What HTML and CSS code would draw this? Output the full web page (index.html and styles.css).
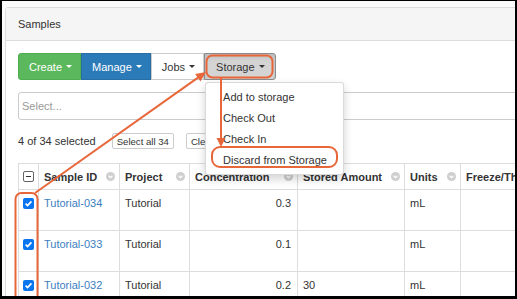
FILE: index.html
```html
<!DOCTYPE html>
<html>
<head>
  <title>Samples</title>
  <link rel="stylesheet" href="styles.css">
</head>
<body>
  <div class="frame">
    <div class="panel">
      <div class="panel-heading">Samples</div>
      <div class="panel-body">
        <div class="toolbar">
          <button class="btn btn-create">Create <span class="caret"></span></button>
          <button class="btn btn-manage">Manage <span class="caret"></span></button>
          <button class="btn btn-jobs">Jobs <span class="caret"></span></button>
          <div class="dropdown">
            <button class="btn btn-storage">Storage <span class="caret"></span></button>
            <ul class="menu">
              <li>Add to storage</li>
              <li>Check Out</li>
              <li>Check In</li>
              <li>Discard from Storage</li>
            </ul>
          </div>
        </div>

        <div class="search">Select...</div>

        <div class="selection">
          <span>4 of 34 selected</span>
          <button class="btn-xs">Select all 34</button>
          <button class="btn-xs btn-clear">Clear all</button>
        </div>

        <table class="grid">
          <colgroup>
            <col style="width:20px">
            <col style="width:81px">
            <col style="width:70px">
            <col style="width:108px">
            <col style="width:107px">
            <col style="width:56px">
            <col style="width:140px">
          </colgroup>
          <thead>
            <tr>
              <th class="cell-check"><span class="check-some"></span></th>
              <th><div class="th">Sample ID <svg class="sort" viewBox="0 0 9 9"><circle cx="4.5" cy="4.5" r="4.5"/><path d="M2.6 3.8 L4.5 5.6 L6.4 3.8"/></svg></div></th>
              <th><div class="th">Project <svg class="sort" viewBox="0 0 9 9"><circle cx="4.5" cy="4.5" r="4.5"/><path d="M2.6 3.8 L4.5 5.6 L6.4 3.8"/></svg></div></th>
              <th><div class="th">Concentration <svg class="sort" viewBox="0 0 9 9"><circle cx="4.5" cy="4.5" r="4.5"/><path d="M2.6 3.8 L4.5 5.6 L6.4 3.8"/></svg></div></th>
              <th><div class="th">Stored Amount <svg class="sort" viewBox="0 0 9 9"><circle cx="4.5" cy="4.5" r="4.5"/><path d="M2.6 3.8 L4.5 5.6 L6.4 3.8"/></svg></div></th>
              <th><div class="th">Units <svg class="sort" viewBox="0 0 9 9"><circle cx="4.5" cy="4.5" r="4.5"/><path d="M2.6 3.8 L4.5 5.6 L6.4 3.8"/></svg></div></th>
              <th><div class="th">Freeze/Thaw Count</div></th>
            </tr>
          </thead>
          <tbody>
            <tr>
              <td class="cell-check"><svg class="check" viewBox="0 0 11 11"><rect width="11" height="11" rx="2"/><path d="M2.6 5.6 L4.6 7.6 L8.4 3.4"/></svg></td>
              <td><a href="#">Tutorial-034</a></td>
              <td>Tutorial</td>
              <td class="num">0.3</td>
              <td></td>
              <td>mL</td>
              <td></td>
            </tr>
            <tr>
              <td class="cell-check"><svg class="check" viewBox="0 0 11 11"><rect width="11" height="11" rx="2"/><path d="M2.6 5.6 L4.6 7.6 L8.4 3.4"/></svg></td>
              <td><a href="#">Tutorial-033</a></td>
              <td>Tutorial</td>
              <td class="num">0.1</td>
              <td></td>
              <td>mL</td>
              <td></td>
            </tr>
            <tr>
              <td class="cell-check"><svg class="check" viewBox="0 0 11 11"><rect width="11" height="11" rx="2"/><path d="M2.6 5.6 L4.6 7.6 L8.4 3.4"/></svg></td>
              <td><a href="#">Tutorial-032</a></td>
              <td>Tutorial</td>
              <td class="num">0.2</td>
              <td>30</td>
              <td>mL</td>
              <td></td>
            </tr>
          </tbody>
        </table>
      </div>
    </div>

    <!-- callouts drawn over the screenshot -->
    <svg class="marks" viewBox="0 0 517 299" width="517" height="299">
      <rect x="206.5" y="55.5" width="66" height="22" rx="6"/>
      <rect x="212" y="147" width="125" height="20" rx="8"/>
      <rect x="15.5" y="193" width="22" height="130" rx="6"/>
      <line x1="35" y1="193" x2="198" y2="77.6"/>
      <polygon class="head" points="206,72 200.4,81.5 195.2,74.1"/>
      <line x1="221" y1="78" x2="221" y2="139"/>
      <polygon class="head" points="221,147 216.5,138 225.5,138"/>
    </svg>
  </div>
</body>
</html>
```

FILE: styles.css
```css
body {
  margin: 0;
  font-family: "Liberation Sans", Arial, sans-serif;
  font-size: 11px;
  color: #333;
}

.frame {
  position: relative;
  width: 517px;
  height: 299px;
  box-sizing: border-box;
  border: solid #000;
  border-width: 1px 2px 3px 2px;
  overflow: hidden;
  background: #fbfbfb;
}

.panel {
  width: 600px;
  margin: 6px 0 0 3px;
  border: 1px solid #ddd;
  border-radius: 3px;
  background: #fff;
}

.panel-heading {
  height: 32px;
  line-height: 32px;
  padding: 0 12px;
  background: #f5f5f5;
  border-bottom: 1px solid #ddd;
}

.panel-body {
  padding: 12px;
}

/* button bar */
.toolbar {
  display: flex;
}

.btn {
  height: 27px;
  box-sizing: border-box;
  display: flex;
  align-items: center;
  gap: 4px;
  padding: 0 8px 0 10px;
  border: 1px solid transparent;
  font-family: inherit;
  font-size: 11px;
  cursor: pointer;
}

.caret {
  width: 0;
  height: 0;
  border-top: 3px solid;
  border-left: 3px solid transparent;
  border-right: 3px solid transparent;
}

.btn-create {
  background: #5cb85c;
  border-color: #4cae4c;
  color: #fff;
  border-radius: 3px 0 0 3px;
}

.btn-manage {
  background: #2b7bb9;
  border-color: #2a6ea6;
  color: #fff;
}

.btn-jobs {
  background: #fff;
  border-color: #ccc;
  color: #333;
}

.btn-storage {
  padding: 0 10px 0 11px;
  background: #d4d4d4;
  border-color: #8c8c8c;
  color: #333;
  border-radius: 0 3px 3px 0;
  box-shadow: inset 0 3px 5px rgba(0, 0, 0, 0.12);
}

.dropdown {
  position: relative;
}

.menu {
  position: absolute;
  top: 29px;
  left: 1px;
  z-index: 2;
  width: 139px;
  box-sizing: border-box;
  margin: 0;
  padding: 4px 0 3px;
  list-style: none;
  background: #fff;
  border: 1px solid rgba(0, 0, 0, 0.15);
  border-radius: 3px;
  box-shadow: 0 4px 10px rgba(0, 0, 0, 0.18);
}

.menu li {
  height: 21px;
  line-height: 21px;
  padding-left: 17px;
  white-space: nowrap;
}

/* search box */
.search {
  margin-top: 12px;
  height: 28px;
  box-sizing: border-box;
  padding: 0 3px;
  line-height: 26px;
  border: 1px solid #ccc;
  border-radius: 3px;
  color: #999;
}

.selection {
  margin-top: 13px;
  height: 16px;
  display: flex;
  align-items: center;
}

.btn-xs {
  height: 16px;
  box-sizing: border-box;
  margin-left: 16px;
  padding: 0 4px;
  border: 1px solid #ccc;
  border-radius: 2px;
  background: #fff;
  color: #333;
  font-family: inherit;
  font-size: 9.6px;
}

.btn-clear {
  margin-left: 12px;
}

/* grid */
.grid {
  margin-top: 14px;
  width: 582px;
  table-layout: fixed;
  border-collapse: collapse;
}

.grid th,
.grid td {
  border: 1px solid #ddd;
  padding: 0 4px 0 5px;
  text-align: left;
  white-space: nowrap;
  overflow: hidden;
}

.grid thead tr {
  height: 26px;
}

.grid tbody tr {
  height: 41px;
}

.grid td {
  vertical-align: top;
  padding-top: 6px;
  line-height: 14px;
}

.grid td.num {
  text-align: right;
  padding-right: 6px;
}

.grid a {
  color: #3a7ebf;
  text-decoration: none;
}

.th {
  display: flex;
  align-items: center;
  justify-content: space-between;
}

.sort {
  width: 9px;
  height: 9px;
  flex: none;
}

.sort circle {
  fill: #cfcfcf;
}

.sort path {
  fill: none;
  stroke: #fff;
  stroke-width: 1.3;
}

.grid .cell-check {
  padding: 0;
  text-align: center;
}

.grid td.cell-check {
  padding-top: 8px;
}

.check {
  display: block;
  width: 11px;
  height: 11px;
  margin: 0 auto;
}

.check rect {
  fill: #0b75f0;
}

.check path {
  fill: none;
  stroke: #fff;
  stroke-width: 1.7;
}

.check-some {
  position: relative;
  display: block;
  width: 11px;
  height: 11px;
  margin: 0 auto;
  box-sizing: border-box;
  border: 1px solid #666;
  border-radius: 2px;
}

.check-some::after {
  content: "";
  position: absolute;
  left: 2px;
  right: 2px;
  top: 4px;
  height: 1px;
  background: #333;
}

/* annotation layer */
.marks {
  position: absolute;
  top: -1px;
  left: -2px;
  z-index: 3;
  fill: none;
  stroke: #e8673a;
  stroke-width: 2;
}

.marks .head {
  fill: #e8673a;
  stroke: none;
}
```
